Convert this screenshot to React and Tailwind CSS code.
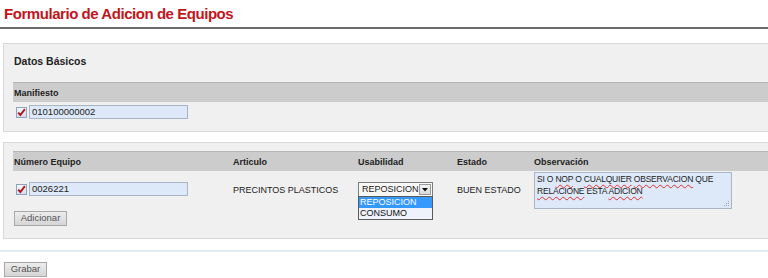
import React from 'react';

const CheckBox = () => (
  <span className="inline-flex items-center justify-center w-[11px] h-[11px] border border-[#8fa3bd] bg-gradient-to-b from-[#f4f7fb] to-[#d5dde8] shrink-0">
    <svg width="9" height="9" viewBox="0 0 9 9">
      <path d="M1.2 4.6 L3.4 7 L7.9 1.2" fill="none" stroke="#b5121b" strokeWidth="1.9" />
    </svg>
  </span>
);

const TextInput = ({ value }) => (
  <div className="w-[159px] h-[14px] border border-[#a9b5c4] bg-[#dde8f8] text-[9.5px] leading-[12px] px-[2px] text-[#222]">
    {value}
  </div>
);

const Button = ({ label, width }) => (
  <div className={`flex items-center justify-center h-[15px] border border-[#a8a8a8] bg-gradient-to-b from-[#ececec] to-[#d6d6d6] text-[9.5px] text-[#555] ${width}`}>
    {label}
  </div>
);

const Spell = ({ children }) => (
  <span className="underline decoration-wavy decoration-[#e03030] decoration-1 underline-offset-[2px]">{children}</span>
);

const App = () => {
  return (
    <div className="w-[768px] h-[278px] overflow-hidden bg-white font-['Liberation_Sans',Arial,sans-serif] text-[#222]">
      <div className="h-[29px] border-b-2 border-[#6b6b6b] pl-[4px] pt-[5px]">
        <h1 className="text-[15px] leading-[18px] tracking-[-0.45px] font-bold text-[#c4141b] whitespace-nowrap">Formulario de Adicion de Equipos</h1>
      </div>

      <div className="mt-[14px] ml-[3px] h-[89px] border border-r-0 border-[#d8d8d8] bg-[#f0f0f0]">
        <div className="h-[38px] pl-[10px] pt-[10px] text-[10.5px] font-bold text-[#222]">Datos Básicos</div>
        <div className="ml-[9px] h-[20px] border-t border-[#b5b5b5] bg-[#cccccc] pl-[1px] pt-[4px] text-[9px] font-bold text-[#222]">
          Manifiesto
        </div>
        <div className="flex items-center gap-[2px] ml-[12px] mt-[3px]">
          <CheckBox />
          <TextInput value="010100000002" />
        </div>
      </div>

      <div className="mt-[10px] ml-[3px] h-[97px] border border-r-0 border-[#d8d8d8] bg-[#f0f0f0] pt-[8px]">
        <div className="ml-[9px] h-[20px] flex border-t border-[#b5b5b5] bg-[#cccccc] pt-[4px] text-[9px] font-bold text-[#222] whitespace-nowrap">
          <div className="w-[220px] pl-[1px]">Número Equipo</div>
          <div className="w-[125px]">Articulo</div>
          <div className="w-[99px]">Usabilidad</div>
          <div className="w-[77px]">Estado</div>
          <div className="flex-1">Observación</div>
        </div>
        <div className="ml-[9px] flex items-start text-[9px] whitespace-nowrap">
          <div className="w-[220px] pt-[11px]">
            <div className="flex items-center gap-[2px] ml-[3px]">
              <CheckBox />
              <TextInput value="0026221" />
            </div>
            <div className="flex ml-[1px] mt-[15px]">
              <Button label="Adicionar" width="w-[53px]" />
            </div>
          </div>
          <div className="w-[125px] pt-[13px] text-[#222]">PRECINTOS PLASTICOS</div>
          <div className="w-[99px] pt-[11px]">
            <div className="relative w-[75px]">
              <div className="flex h-[15px] border border-[#7c7c7c] bg-[#f7f7f7]">
                <div className="flex-1 pl-[3px] leading-[13px]">REPOSICION</div>
                <div className="w-[12px] my-[1px] mr-[1px] border border-[#9a9a9a] bg-gradient-to-b from-[#f5f5f5] to-[#d9d9d9] flex items-center justify-center">
                  <svg width="6" height="4" viewBox="0 0 6 4">
                    <path d="M0 0 L6 0 L3 3.5 Z" fill="#111" />
                  </svg>
                </div>
              </div>
              <div className="absolute left-0 top-[14px] w-[75px] border border-[#5a5a5a] bg-[#eef3fb] leading-[11px]">
                <div className="bg-[#3399ff] text-white pl-[1px] h-[11px]">REPOSICION</div>
                <div className="pl-[1px] h-[11px] text-[#111]">CONSUMO</div>
              </div>
            </div>
          </div>
          <div className="w-[77px] pt-[13px]">BUEN ESTADO</div>
          <div className="pt-[1px] whitespace-normal">
            <div className="relative w-[198px] h-[37px] border border-[#a9b5c4] bg-[#dde8f8] px-[2px] text-[8.5px] tracking-[-0.2px] leading-[12px] text-[#222]">
              SI O <Spell>NOP</Spell> O <Spell>CUALQUIER</Spell> <Spell>OBSERVACION</Spell> QUE <Spell>RELACIONE</Spell> ESTA <Spell>ADICION</Spell>
              <svg className="absolute right-[1px] bottom-[1px]" width="7" height="7" viewBox="0 0 7 7">
                <rect x="5" y="1" width="1" height="1" fill="#9aa" />
                <rect x="3" y="3" width="1" height="1" fill="#9aa" />
                <rect x="5" y="3" width="1" height="1" fill="#9aa" />
                <rect x="1" y="5" width="1" height="1" fill="#9aa" />
                <rect x="3" y="5" width="1" height="1" fill="#9aa" />
                <rect x="5" y="5" width="1" height="1" fill="#9aa" />
              </svg>
            </div>
          </div>
        </div>
      </div>

      <div className="mt-[11px] h-[2px] bg-[#e3ebf8]" />

      <div className="flex mt-[10px] ml-[4px]">
        <Button label="Grabar" width="w-[43px]" />
      </div>
    </div>
  );
};

export default App;
